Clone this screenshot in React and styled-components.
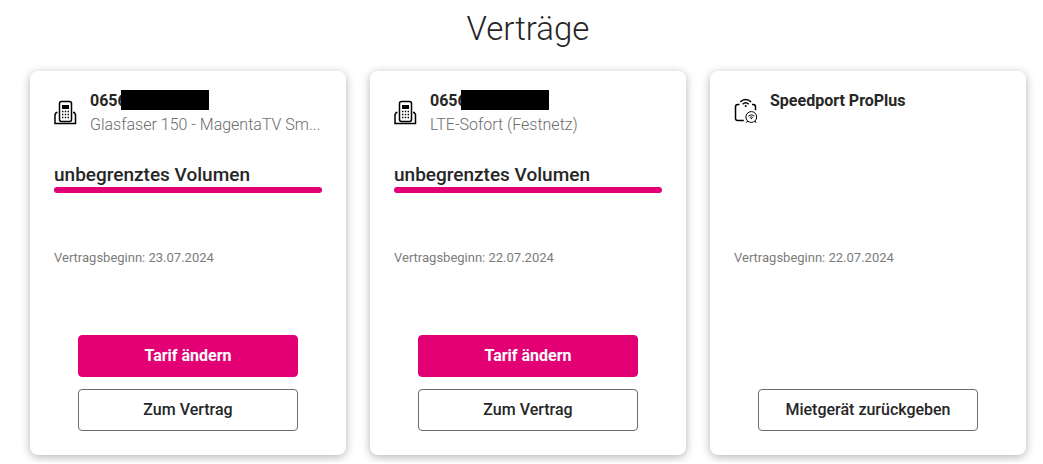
import styled, { createGlobalStyle } from "styled-components"

const GlobalStyle = createGlobalStyle`
  body {
    margin: 0;
    background-color: #ffffff;
    color: #262626;
    font-family: Roboto, "Liberation Sans", sans-serif;
  }
`

const Page = styled.main`
  padding: 8px 17px 8px 30px;
`

const Title = styled.h1`
  margin: 0 0 21px;
  font-size: 33px;
  font-weight: 300;
  line-height: 42px;
  text-align: center;
`

const CardList = styled.div`
  display: grid;
  grid-template-columns: repeat(auto-fit, minmax(280px, 1fr));
  gap: 24px;
`

const Card = styled.article`
  display: flex;
  flex-direction: column;
  box-sizing: border-box;
  min-width: 0;
  padding: 18px 24px 24px;
  border-radius: 8px;
  background-color: #ffffff;
  box-shadow: 0 2px 10px rgba(0, 0, 0, 0.3);
`

const CardHeader = styled.header`
  display: flex;
  align-items: flex-start;
  gap: 12px;
  min-height: 48px;

  & svg {
    flex: none;
    width: 24px;
    height: 24px;
    margin-top: 11px;
    overflow: visible;
  }
`

const CardHeading = styled.div`
  min-width: 0;
  line-height: 24px;
`

const ContractName = styled.h2`
  display: flex;
  align-items: flex-start;
  margin: 0;
  font-size: 16px;
  font-weight: 700;
  line-height: 24px;
`

const Redaction = styled.span`
  width: 88px;
  height: 20px;
  margin: 1px 0 0 -6px;
  background-color: #000000;
`

const TariffName = styled.p`
  margin: 0;
  overflow: hidden;
  color: #6c6c6c;
  font-size: 16px;
  font-weight: 300;
  white-space: nowrap;
`

const Usage = styled.div`
  min-height: 86px;
  margin-top: 26px;
`

const UsageText = styled.p`
  margin: 0;
  font-size: 19px;
  font-weight: 500;
  line-height: 24px;
`

const UsageBar = styled.div`
  height: 6px;
  border-radius: 3px;
  background-color: #e20074;
`

const StartDate = styled.p`
  margin: 0 0 68px;
  color: #7c7c7c;
  font-size: 13px;
  font-weight: 400;
  line-height: 18px;
`

const Actions = styled.div`
  display: flex;
  flex-direction: column;
  gap: 12px;
  margin: auto 24px 0;
`

const Button = styled.button`
  height: 42px;
  padding: 0 12px 2px;
  border: 1px solid ${(props) => (props.$primary ? "#e20074" : "#6c6c6c")};
  border-radius: 4px;
  background-color: ${(props) => (props.$primary ? "#e20074" : "#ffffff")};
  color: ${(props) => (props.$primary ? "#ffffff" : "#262626")};
  font-family: inherit;
  font-size: 16px;
  font-weight: ${(props) => (props.$primary ? 700 : 500)};
  cursor: pointer;
`

const PhoneIcon = () => (
  <svg viewBox="0 0 24 24" fill="none" stroke="#000000" aria-hidden="true">
    <rect x="5.5" y="1.5" width="12" height="20" rx="2" strokeWidth="1.5" />
    <path d="M3.5 12.5H2.2L1 14.5v9h20.5v-9l-1.2-2H19" strokeWidth="1.5" />
    <path d="M8 5h7v4H8z" fill="#000000" stroke="none" />
    <path
      d="M8 11.5h7M8 14.5h7M8 17.5h7"
      strokeWidth="1.4"
      strokeDasharray="1.4 1.4"
    />
  </svg>
)

const RouterIcon = () => (
  <svg
    viewBox="0 0 24 24"
    fill="none"
    stroke="#000000"
    strokeWidth="1.5"
    aria-hidden="true"
  >
    <path d="M5.5 4.5H3.8A2.3 2.3 0 0 0 1.5 6.8v11.4a2.3 2.3 0 0 0 2.3 2.3h6" />
    <path d="M18 4.5h1.2a2.3 2.3 0 0 1 2.3 2.3v3.4" />
    <path d="M6.3 1.9c3-3.2 7.7-3.2 10.8 0M8.7 4.3c1.8-1.8 4.2-1.8 6 0" />
    <circle cx="11.7" cy="6" r="1" fill="#000000" stroke="none" />
    <circle cx="17.3" cy="17" r="5.4" strokeWidth="1" />
    <path
      d="M14.3 16.2c1.8-1.7 4.2-1.7 6 0M15.7 17.6c1-.8 2.2-.8 3.2 0M13.5 21l-1 1.8M21.1 21l1 1.8"
      strokeWidth="1"
    />
    <circle cx="17.3" cy="18.6" r="0.7" fill="#000000" stroke="none" />
  </svg>
)

const contracts = [
  {
    name: "0656",
    redacted: true,
    tariff: "Glasfaser 150 - MagentaTV Sm...",
    usage: "unbegrenztes Volumen",
    start: "23.07.2024",
    actions: ["Tarif ändern", "Zum Vertrag"],
    Icon: PhoneIcon,
  },
  {
    name: "0656",
    redacted: true,
    tariff: "LTE-Sofort (Festnetz)",
    usage: "unbegrenztes Volumen",
    start: "22.07.2024",
    actions: ["Tarif ändern", "Zum Vertrag"],
    Icon: PhoneIcon,
  },
  {
    name: "Speedport ProPlus",
    start: "22.07.2024",
    actions: ["Mietgerät zurückgeben"],
    Icon: RouterIcon,
  },
]

const ContractCard = ({ name, redacted, tariff, usage, start, actions, Icon }) => (
  <Card>
    <CardHeader>
      <Icon />
      <CardHeading>
        <ContractName>
          {name}
          {redacted && <Redaction />}
        </ContractName>
        {tariff && <TariffName>{tariff}</TariffName>}
      </CardHeading>
    </CardHeader>
    <Usage>
      {usage && (
        <>
          <UsageText>{usage}</UsageText>
          <UsageBar />
        </>
      )}
    </Usage>
    <StartDate>Vertragsbeginn: {start}</StartDate>
    <Actions>
      {actions.map((label) => (
        <Button key={label} type="button" $primary={label === "Tarif ändern"}>
          {label}
        </Button>
      ))}
    </Actions>
  </Card>
)

export default function App() {
  return (
    <>
      <GlobalStyle />
      <Page>
        <Title>Verträge</Title>
        <CardList>
          {contracts.map((contract, index) => (
            <ContractCard key={index} {...contract} />
          ))}
        </CardList>
      </Page>
    </>
  )
}
